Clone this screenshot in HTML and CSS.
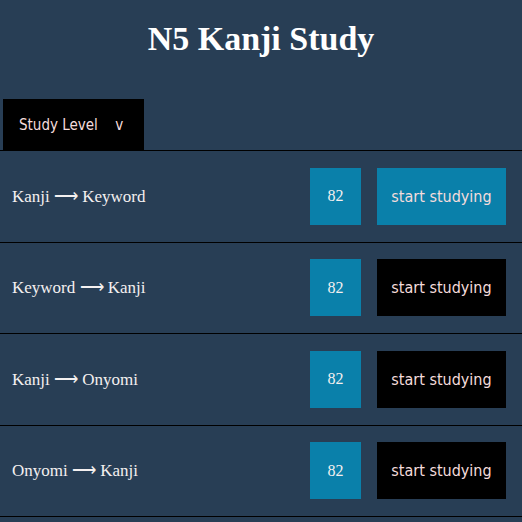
FILE: index.html
```html
<!DOCTYPE html>
<html>
<head>
<meta charset="utf-8">
<link rel="stylesheet" href="styles.css">
</head>
<body>
<h1 class="title">N5 Kanji Study</h1>
<nav class="nav">
  <button class="level-btn">Study Level <span class="chev">v</span></button>
</nav>
<div class="rows">
  <div class="row">
    <span class="label">Kanji ⟶ Keyword</span>
    <span class="count">82</span>
    <button class="start active">start studying</button>
  </div>
  <div class="row">
    <span class="label">Keyword ⟶ Kanji</span>
    <span class="count">82</span>
    <button class="start">start studying</button>
  </div>
  <div class="row">
    <span class="label">Kanji ⟶ Onyomi</span>
    <span class="count">82</span>
    <button class="start">start studying</button>
  </div>
  <div class="row">
    <span class="label">Onyomi ⟶ Kanji</span>
    <span class="count">82</span>
    <button class="start">start studying</button>
  </div>
</div>
</body>
</html>
```
FILE: styles.css
```css
html, body {
  margin: 0;
  padding: 0;
  background: #283e55;
}
body {
  font-family: "Liberation Serif", serif;
  color: #f4f0f0;
}
.title {
  margin: 20px 0 0;
  height: 79px;
  text-align: center;
  font-size: 34px;
  font-weight: bold;
  line-height: 38px;
  color: #ffffff;
}
.nav {
  display: flex;
  padding-left: 3px;
  border-bottom: 1px solid #000;
}
.level-btn {
  background: #000;
  color: #f5dcdc;
  border: none;
  height: 51px;
  width: 141px;
  padding: 0 0 0 16px;
  text-align: left;
  font-family: "DejaVu Sans Condensed", "DejaVu Sans", sans-serif;
  font-size: 15px;
}
.chev {
  margin-left: 13px;
}
.row {
  display: flex;
  align-items: center;
  height: 90.5px;
  padding: 0 16px 0 12px;
  border-bottom: 1px solid #000;
}
.label {
  flex: 1;
  font-size: 17px;
  color: #f4f0f0;
}
.count {
  width: 51px;
  height: 57px;
  display: flex;
  align-items: center;
  justify-content: center;
  background: #0a80aa;
  font-size: 16px;
  color: #f4f0f0;
  margin-right: 16px;
}
.start {
  width: 129px;
  height: 57px;
  border: none;
  background: #000;
  color: #f5dcdc;
  font-family: "DejaVu Sans Condensed", "DejaVu Sans", sans-serif;
  font-size: 16px;
  padding: 0;
}
.start.active {
  background: #0a80aa;
}
```
